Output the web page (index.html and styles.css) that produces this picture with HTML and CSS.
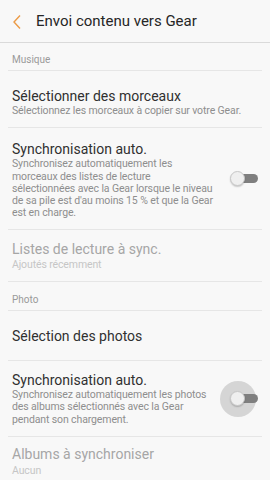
FILE: index.html
```html
<!DOCTYPE html>
<html lang="fr">
<head>
    <meta charset="UTF-8">
    <meta name="viewport" content="width=device-width, initial-scale=1.0">
    <title>Envoi contenu vers Gear</title>
    <link rel="stylesheet" href="styles.css">
</head>
<body>
    <div class="header">
        <svg class="back" width="10" height="16" viewBox="0 0 10 16">
            <polyline points="8,1.5 2,8 8,14.5" fill="none" stroke="#ec9a45" stroke-width="1.4"/>
        </svg>
        <span class="title">Envoi contenu vers Gear</span>
    </div>
    <div class="list">
        <div class="section">Musique</div>
        <div class="item first">
            <div class="item-title">Sélectionner des morceaux</div>
            <div class="item-sub">Sélectionnez les morceaux à copier sur votre Gear.</div>
        </div>
        <div class="item toggle-row">
            <div class="item-text">
                <div class="item-title">Synchronisation auto.</div>
                <div class="item-sub">Synchronisez automatiquement les<br>morceaux des listes de lecture<br>sélectionnées avec la Gear lorsque le niveau<br>de sa pile est d'au moins 15 % et que la Gear<br>est en charge.</div>
            </div>
            <div class="switch up"><span class="track"></span><span class="knob"></span></div>
        </div>
        <div class="item disabled">
            <div class="item-title">Listes de lecture à sync.</div>
            <div class="item-sub">Ajoutés récemment</div>
        </div>
        <div class="section photo">Photo</div>
        <div class="item single">
            <div class="item-title">Sélection des photos</div>
        </div>
        <div class="item toggle-row second">
            <div class="item-text">
                <div class="item-title">Synchronisation auto.</div>
                <div class="item-sub">Synchronisez automatiquement les photos<br>des albums sélectionnés avec la Gear<br>pendant son chargement.</div>
            </div>
            <div class="switch pressed"><span class="halo"></span><span class="track"></span><span class="knob"></span></div>
        </div>
        <div class="item disabled last">
            <div class="item-title">Albums à synchroniser</div>
            <div class="item-sub">Aucun</div>
        </div>
    </div>
</body>
</html>
```

FILE: styles.css
```css
body { margin: 0; background: #f8f8f8; font-family: Roboto, "Noto Sans", sans-serif; color: #222; overflow: hidden; }

.header { height: 42px; display: flex; align-items: center; border-bottom: 1px solid #dadada; }
.back { margin-left: 12px; margin-top: 1px; }
.title { margin-left: 14px; font-size: 15px; color: #262626; }

.list { padding: 0 8px; }
.section { padding: 11px 4px 4px; font-size: 10px; line-height: 12px; color: #9a9a9a; border-bottom: 1px solid #e6e6e6; }
.section.photo { padding-top: 12px; }

.item { padding: 16px 4px 10px; border-bottom: 1px solid #e6e6e6; }
.item.single { padding: 16px 4px 15px; }
.item.last { border-bottom: none; padding-top: 8px; }
.item-title { font-size: 14px; line-height: 18px; color: #303030; }
.item-sub { font-size: 10.5px; line-height: 12.3px; letter-spacing: -0.12px; color: #8e8e8e; }

.toggle-row { display: flex; align-items: center; padding-top: 12px; padding-bottom: 9px; }
.toggle-row.second { padding-top: 10px; padding-bottom: 10px; }
.item-text { width: 214px; }

.disabled { padding-top: 10px; padding-bottom: 10px; }
.disabled .item-title { color: #a6a6a6; }
.disabled .item-sub { color: #c6c6c6; margin-top: 1px; }
.last .item-sub { margin-top: 2px; }

.switch { position: relative; width: 28px; height: 15px; margin-left: auto; }
.switch.up { margin-bottom: 3px; }
.track { position: absolute; right: 0; top: 3px; width: 23px; height: 9px; border-radius: 4.5px; background: #7f7f7f; }
.knob { position: absolute; left: 0; top: 0; width: 15px; height: 15px; border-radius: 50%; background: #efefef; border: 1px solid #c8c8c8; box-shadow: 0 1px 1.5px rgba(0,0,0,0.2); box-sizing: border-box; }
.halo { position: absolute; left: -10.5px; top: -10.5px; width: 36px; height: 36px; border-radius: 50%; background: #d5d5d5; }
```
